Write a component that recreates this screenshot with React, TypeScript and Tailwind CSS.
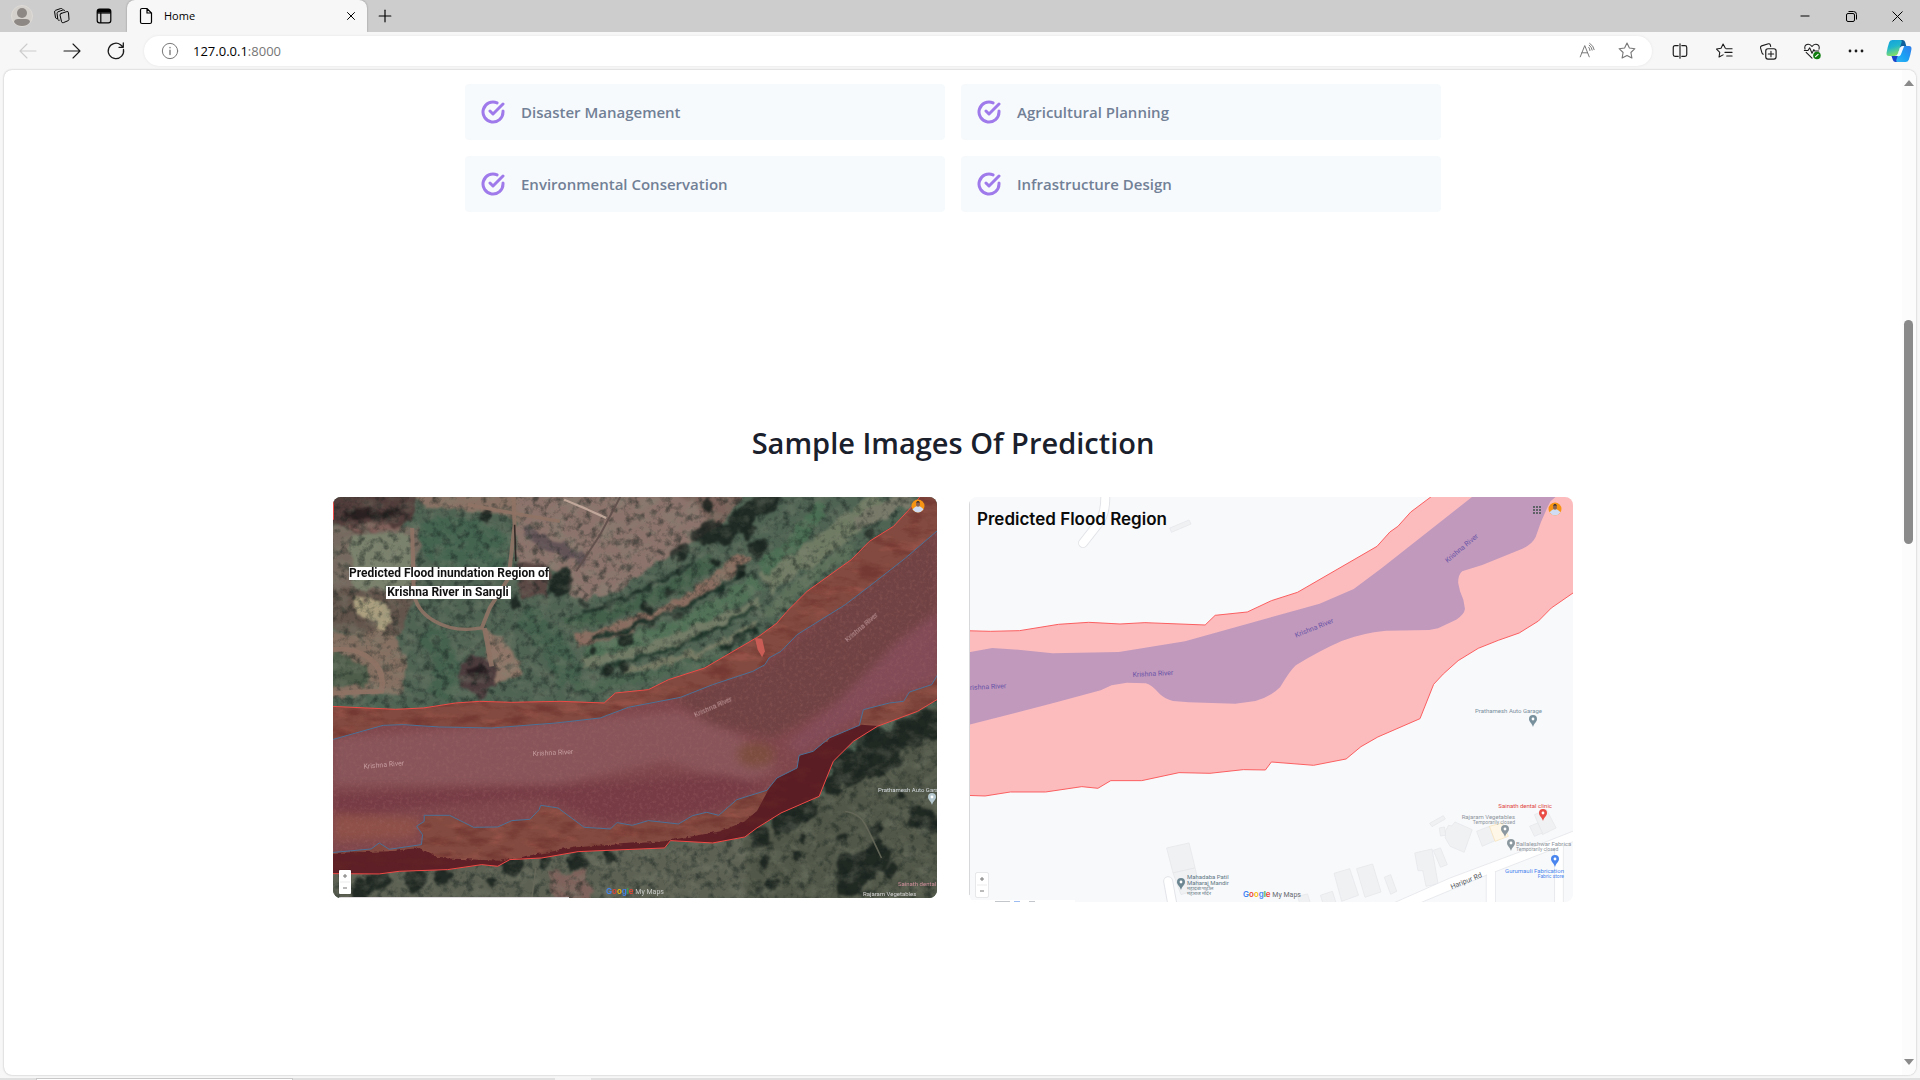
import React from "react";
import { Minus, Plus, X } from "lucide-react";

const ui = "font-['Open_Sans','Noto_Sans',sans-serif]";

const features = [
  "Disaster Management",
  "Agricultural Planning",
  "Environmental Conservation",
  "Infrastructure Design",
];

function Icon({ children, size = 20, className = "" }: { children: React.ReactNode; size?: number; className?: string }) {
  return (
    <svg
      width={size}
      height={size}
      viewBox="0 0 20 20"
      fill="none"
      stroke="currentColor"
      strokeWidth="1.1"
      strokeLinecap="round"
      strokeLinejoin="round"
      className={className}
      aria-hidden="true"
    >
      {children}
    </svg>
  );
}

function TitleBar() {
  const control = "flex h-8 w-[46px] items-center justify-center";
  return (
    <header className="flex h-8 items-stretch bg-[#cdcdcd] text-black">
      <button aria-label="Profile" className="flex w-11 items-center justify-center">
        <svg width="22" height="22" viewBox="0 0 22 22">
          <circle cx="11" cy="11" r="10.5" fill="#d4d0cc" stroke="#dedbd7" />
          <circle cx="11" cy="8" r="5" fill="#8e8884" />
          <path d="M3 17c0-2 2-3 4-3h8c2 0 4 1 4 3-2 3-5 4-8 4s-6-1-8-4z" fill="#8e8884" />
        </svg>
      </button>
      <button aria-label="Workspaces" className="flex w-9 items-center justify-center">
        <Icon size={18}>
          <path d="M9 7.2l6.4-2.1q1.8-.3 1.8 1.2l.6 7.5q0 1-1 1.4l-5.300 2.200q-1.500.5-2-1L7.800 9q-.2-1.300 1.200-1.800z" />
          <path d="M7 14.800q-1.200.2-1.600-.8L4.500 7.200q-.1-1.300 1-1.800L11 3.300q1-.3 1.800.4M4.500 12.800q-1.200.2-1.700-.8L1.800 5.500q-.1-1.300 1-1.800L8.500 1.700q1-.3 1.800.4" />
        </Icon>
      </button>
      <button aria-label="Tab actions" className="flex w-[47px] items-center justify-center">
        <Icon size={16}>
          <rect x="1.500" y="1.500" width="17" height="17" rx="3" strokeWidth="1.500" />
          <path d="M2 6V4q0-2 2-2h12q2 0 2 2v2z" fill="currentColor" />
          <path d="M6 6v12" strokeWidth="1.500" />
        </Icon>
      </button>
      <div className="flex w-60 items-center rounded-t-lg bg-[#f7f7f7] pr-2 pl-3 shadow-[0_0_2px_rgba(0,0,0,0.35)]">
        <svg width="14" height="18" viewBox="0 0 14 18" fill="none" stroke="black" strokeWidth="1.200" aria-hidden="true">
          <path d="M1.500 3q0-1.500 1.500-1.500h5L12.500 6v9q0 1.500-1.500 1.500H3q-1.500 0-1.500-1.500zM8 1.500V6h4.500" />
        </svg>
        <span className={`ml-[11px] flex-1 text-[11px] leading-4 ${ui}`}>Home</span>
        <button aria-label="Close tab" className="flex size-4 items-center justify-center">
          <X size={14} strokeWidth={1.7} />
        </button>
      </div>
      <button aria-label="New tab" className="flex w-9 items-center justify-center">
        <Plus size={20} strokeWidth={1.400} />
      </button>
      <div className="ml-auto flex">
        <button aria-label="Minimize" className={control}>
          <Minus size={14} strokeWidth={1.700} />
        </button>
        <button aria-label="Restore" className={control}>
          <svg width="11" height="11" viewBox="0 0 11 11" fill="none" stroke="black" aria-hidden="true">
            <rect x=".5" y="2.500" width="8" height="8" rx="1.500" />
            <path d="M2.500.500h5q3 0 3 3v5" />
          </svg>
        </button>
        <button aria-label="Close" className={control}>
          <svg width="11" height="11" viewBox="0 0 11 11" stroke="black" aria-hidden="true">
            <path d="M.500.500l10 10M10.500.500l-10 10" />
          </svg>
        </button>
      </div>
    </header>
  );
}

function CopilotLogo() {
  return (
    <svg width="26" height="24" viewBox="0 0 26 24" aria-hidden="true">
      <defs>
        <linearGradient id="cpA" x1="0" y1="0" x2="0.300" y2="1">
          <stop offset="0" stopColor="#14a0dc" />
          <stop offset="0.500" stopColor="#1fb5cf" />
          <stop offset="1" stopColor="#7fdc6a" />
        </linearGradient>
        <linearGradient id="cpB" x1="1" y1="0" x2="0" y2="1">
          <stop offset="0" stopColor="#2f7bea" />
          <stop offset="0.600" stopColor="#1aa3f4" />
          <stop offset="1" stopColor="#36b6f0" />
        </linearGradient>
      </defs>
      <path d="M12 1h4.500q2 0 2.600 2l1.200 4h-3q-2 0-2.800 2z" fill="#0f5f9c" />
      <path d="M14 23H9.500q-2 0-2.600-2L5.500 17h3q2 0 2.800-2z" fill="#1b41c9" />
      <path d="M6.500 1H14q2.300 0 1.600 2.300L12 14.500q-.9 2.500-3.500 2.500H3q-3 0-2.400-3.500Q1.500 8 3.200 3.200 4 1 6.500 1z" fill="url(#cpA)" />
      <path d="M19.500 23H12q-2.300 0-1.600-2.300L14 9.500Q14.900 7 17.500 7H23q3 0 2.400 3.500-.9 5.500-2.600 10.300-.8 2.200-3.300 2.200z" fill="url(#cpB)" />
      <path d="M14.200 8.500q1-1.700 3-1.500h1l-3.300 8.500q-1 2.300-3 1.500H9q2-.3 3-2.500z" fill="#f3f8ff" />
    </svg>
  );
}

const STAR = "M10 2l2.400 5 5.500.7-4 3.800 1 5.500L10 14.400 5.100 17l1-5.500-4-3.800 5.500-.7z";

function Toolbar() {
  const tool = "flex h-8 w-11 items-center justify-center";
  return (
    <nav className="flex h-[38px] items-center bg-[#f7f7f7] pl-1.5 text-[#1b1b1b]">
      <button aria-label="Back" className={`${tool} text-[#cccccc]`} disabled>
        <Icon><path d="M18 10H2M9 3l-7 7 7 7" /></Icon>
      </button>
      <button aria-label="Forward" className={tool}>
        <Icon><path d="M2 10h16M11 3l7 7-7 7" /></Icon>
      </button>
      <button aria-label="Refresh" className={tool}>
        <Icon><path d="M17.500 8.500A7.700 7.700 0 1 1 14.500 3.700L17 6M17.300 2v4.300H13" strokeWidth="1.300" /></Icon>
      </button>
      <div className="ml-1.5 flex h-[30px] flex-1 items-center rounded-full bg-white pr-[5px] pl-[17px] text-[#767676] shadow-[0_0_3px_rgba(0,0,0,0.08)]">
        <Icon size={18}>
          <circle cx="10" cy="10" r="8.500" />
          <path d="M10 9.200v4.800M10 6v.500" strokeWidth="1.500" />
        </Icon>
        <a href="#home" className={`ml-3.5 flex-1 text-[13px] leading-5 ${ui}`}>
          <span className="text-black">127.0.0.1</span>:8000
        </a>
        <button aria-label="Read aloud" className="flex w-10 justify-center">
          <Icon size={18}>
            <path d="M2.500 16.500L7.500 4l5 12.500M4.300 12h6.400M12 6q1.300 1.500 1.300 3.500M12.500 3.500q3 2.500 3.300 5.500M13 1.500q4.500 2.800 5 7" />
          </Icon>
        </button>
        <button aria-label="Add to favorites" className="flex w-10 justify-center">
          <Icon><path d={STAR} /></Icon>
        </button>
      </div>
      <div className="ml-1.5 flex">
        <button aria-label="Split screen" className={tool}>
          <Icon size={18}>
            <path d="M8 4H4.500Q2.500 4 2.500 6v8q0 2 2 2H8M12 4h3.500q2 0 2 2v8q0 2-2 2H12M10 2v16" strokeWidth="1.300" />
          </Icon>
        </button>
        <button aria-label="Favorites" className={tool}>
          <Icon size={18}><path d="M11.500 7L9 2.300 6.700 7l-5 .8 3.600 3.600-.8 5.300 4.500-2.400M12.500 7.500H19M11 11.500h8M13 15.500h6" strokeWidth="1.200" /></Icon>
        </button>
        <button aria-label="Collections" className={tool}>
          <Icon size={18}>
            <rect x="7.500" y="7.500" width="11.500" height="11.500" rx="2.500" strokeWidth="1.300" />
            <path d="M13.300 10.300v6M10.300 13.300h6M4.800 13.500q-1.200-.3-1.500-1.500L1.700 6.500q-.3-1.700 1.200-2.200L10.500 2q1.500-.3 2 1l.500 2" strokeWidth="1.200" />
          </Icon>
        </button>
        <button aria-label="Browser essentials" className={tool}>
          <Icon size={18}>
            <path d="M2.200 8Q1 3 5.500 2.500 8.300 2.300 10 5q1.700-2.700 4.500-2.500Q19 3 17.800 8M3.500 11.500L10 18M1.500 9.500h4l2-3 2.500 6 2-4 1 1.500h4.500" strokeWidth="1.200" />
            <circle cx="15.500" cy="15" r="4.200" fill="#107c10" stroke="none" />
            <path d="M14 16.300l2.800-2.600" stroke="white" strokeWidth="1.300" />
          </Icon>
        </button>
        <button aria-label="Settings and more" className={tool}>
          <Icon>
            <path d="M4 10h.01M10 10h.01M16 10h.01" strokeWidth="2.800" />
          </Icon>
        </button>
        <button aria-label="Copilot" className="flex h-8 w-[42px] items-center justify-center">
          <CopilotLogo />
        </button>
      </div>
    </nav>
  );
}

function Feature({ label }: { label: string }) {
  return (
    <li className="flex h-14 items-center rounded bg-[#f7fafc] px-4">
      <svg
        width="24"
        height="24"
        viewBox="0 0 24 24"
        fill="none"
        stroke="#9f7aea"
        strokeWidth="3"
        strokeLinecap="round"
        strokeLinejoin="round"
        aria-hidden="true"
      >
        <path d="M22 11.080V12a10 10 0 1 1-5.930-9.140" />
        <path d="M22 4L12 14.010l-3-3" />
      </svg>
      <span className={`ml-4 text-[15px] leading-6 font-semibold text-[#718096] ${ui}`}>{label}</span>
    </li>
  );
}

function Pin({ x, y, color }: { x: number; y: number; color: string }) {
  return (
    <g transform={`translate(${x} ${y})`}>
      <path d="M0 8C-1 4-4 3-4 0a4 4 0 1 1 8 0C4 3 1 4 0 8z" fill={color} />
      <circle r="1.400" fill="white" />
    </g>
  );
}

type LabelProps = {
  x: number;
  y: number;
  children: React.ReactNode;
  size?: number;
  color?: string;
  anchor?: "start" | "middle" | "end";
  turn?: number;
  weight?: number;
};

function Label({ x, y, children, size = 6, color = "#78909c", anchor = "start", turn = 0, weight = 400 }: LabelProps) {
  return (
    <text
      transform={`translate(${x} ${y}) rotate(${turn})`}
      fontFamily="Roboto, sans-serif"
      fontSize={size}
      fontWeight={weight}
      fill={color}
      textAnchor={anchor}
    >
      {children}
    </text>
  );
}

function GoogleMaps({ x, y, tone }: { x: number; y: number; tone: string }) {
  return (
    <text x={x} y={y} fontFamily="Inter, sans-serif" fontSize="8" fontWeight="600">
      <tspan fill="#4285f4">G</tspan>
      <tspan fill="#ea4335">o</tspan>
      <tspan fill="#fbbc05">o</tspan>
      <tspan fill="#4285f4">g</tspan>
      <tspan fill="#34a853">l</tspan>
      <tspan fill="#ea4335">e</tspan>
      <tspan fill={tone} fontFamily="Roboto, sans-serif" fontWeight="400" fontSize="7"> My Maps</tspan>
    </text>
  );
}

function ZoomControl({ x, y }: { x: number; y: number }) {
  return (
    <g transform={`translate(${x} ${y})`}>
      <rect x="-.5" y="-.5" width="13" height="25" rx="1" fill="#00000022" />
      <rect width="12" height="24" rx="1" fill="white" />
      <path d="M1 12h10" stroke="#e3e3e3" strokeWidth=".7" />
      <path d="M4 6h4M6 4v4M4 18h4" stroke="#777" />
    </g>
  );
}

function Avatar({ x, y }: { x: number; y: number }) {
  return (
    <g transform={`translate(${x} ${y})`}>
      <circle r="6.500" fill="#f79414" />
      <path d="M-5.500 3.500Q-3 0 0 0t5.500 3.500Q3 6.500 0 6.500t-5.500-3z" fill="#cfdcf2" />
      <ellipse cy="-2" rx="2" ry="2.800" fill="#8b6350" />
      <path d="M-2-3.500q2-3 4 0z" fill="#2d2522" />
    </g>
  );
}

const FLOOD_TOP =
  "M30 665L190 674L260 670L340 655L400 650L480 653L600 650L710 655L738 625L820 615L870 585L960 550L1095 455L1140 415L1165 380L1215 320L1290 255L1325 225L1370 170L1430 125L1480 60L1500 30";
const FLOOD_BOTTOM =
  "L1545 640L1490 680L1390 725L1330 770L1280 830L1245 935L1150 985L1090 1030L1060 1057L980 1075L875 1068L860 1090L645 1101L555 1120L475 1125L445 1145L405 1140L320 1155L200 1160L150 1168L30 1167";
const WATER_TOP =
  "M30 766L160 722L210 720L300 727L430 730L590 715L700 700L770 668L900 638L980 600L1080 560L1110 540L1120 520L1150 500L1190 450L1310 360L1370 305L1460 220L1545 132";
const WATER_BOTTOM_POINTS =
  "1545 560L1525 600L1470 622L1455 650L1420 655L1355 675L1345 722L1270 760L1230 800L1195 812L1190 850L1140 880L1115 917L1040 945L995 992L965 983L930 993L895 1018L820 1008L780 1022L742 1014L725 1033L660 1028L595 970L552 962L548 975L525 1004L480 1008L445 1027L385 1028L325 992L262 992L262 1010L243 1025L258 1050L255 1080L175 1094L150 1075L130 1093L30 1104";

const trees: [number, number, number][] = [
  [945, 150, 22], [975, 135, 30], [1010, 150, 26], [1050, 110, 30], [1075, 75, 28], [1100, 55, 26], [1090, 190, 24],
  [1060, 140, 24], [900, 205, 18], [965, 60, 14], [600, 290, 30], [610, 310, 20], [660, 355, 14], [765, 465, 18],
  [685, 500, 12], [490, 355, 14], [990, 232, 14], [1050, 262, 14], [1120, 50, 26], [415, 90, 16],
  [1370, 150, 10], [870, 325, 12], [820, 370, 14], [890, 395, 10], [720, 560, 12], [760, 550, 12],
  [1320, 850, 44], [1390, 800, 60], [1470, 740, 46], [1520, 720, 40], [1500, 1000, 32], [1525, 1025, 26], [1340, 1150, 46],
  [1390, 1110, 36], [1320, 1190, 36], [1280, 900, 26], [1210, 975, 30], [1160, 1010, 36], [1100, 1060, 26], [1110, 1130, 14],
  [1190, 1120, 12], [1130, 1200, 14], [1300, 1060, 12], [1385, 1040, 14], [1395, 1070, 12],
  [1450, 930, 12], [1425, 1160, 16], [1100, 1220, 14], [150, 1190, 28], [240, 1185, 26], [310, 1175, 20], [480, 1145, 26],
  [560, 1130, 18], [640, 1130, 24], [720, 1115, 14], [430, 1195, 14], [110, 1215, 26], [1200, 1060, 10],
];

const rows: [string, string, number][] = [
  ["M640 470Q900 400 1060 210", "#8a6d60", 12],
  ["M620 420Q850 360 990 220", "#43604b", 13],
  ["M650 390Q800 330 940 230", "#26392f", 4],
  ["M680 460Q880 410 1060 262", "#20342b", 5],
  ["M660 510Q950 430 1090 290", "#527258", 15],
  ["M650 540Q900 480 1100 350", "#717b65", 10],
  ["M700 555Q900 500 1090 370", "#263d30", 4],
  ["M760 560Q950 520 1090 425", "#757a64", 7],
  ["M760 600Q960 530 1095 430", "#20342a", 5],
  ["M640 610Q900 570 1000 500", "#4d6753", 10],
  ["M1110 300Q1260 180 1400 45", "#707b64", 22],
  ["M1100 250Q1200 180 1250 60", "#4a6e53", 14],
  ["M1110 400Q1230 260 1330 190", "#5c705a", 12],
  ["M1330 120Q1400 80 1480 37", "#797969", 14],
];

function SatelliteMap() {
  return (
    <svg viewBox="0 0 604 401" className="block w-full rounded-lg" role="img" aria-label="Satellite view of the predicted flood region">
      <defs>
        <filter id="rough" x="-5%" y="-5%" width="110%" height="110%" colorInterpolationFilters="sRGB">
          <feTurbulence type="fractalNoise" baseFrequency="0.070" numOctaves="4" seed="4" />
          <feDisplacementMap in="SourceGraphic" scale="14" xChannelSelector="R" yChannelSelector="G" />
          <feGaussianBlur stdDeviation="0.800" />
        </filter>
        <filter id="shade" x="0" y="0" width="100%" height="100%" colorInterpolationFilters="sRGB">
          <feTurbulence type="fractalNoise" baseFrequency="0.120" numOctaves="5" seed="9" />
          <feColorMatrix values="0 0 0 0 0.080  0 0 0 0 0.120  0 0 0 0 0.110  3 0 0 0 -1.400" />
        </filter>
        <filter id="glow" x="0" y="0" width="100%" height="100%" colorInterpolationFilters="sRGB">
          <feTurbulence type="fractalNoise" baseFrequency="0.060 0.080" numOctaves="5" seed="21" />
          <feColorMatrix values="0 0 0 0 0.510  0 0 0 0 0.530  0 0 0 0 0.460  0 2.600 0 0 -1.150" />
        </filter>
        <filter id="rust" x="0" y="0" width="100%" height="100%" colorInterpolationFilters="sRGB">
          <feTurbulence type="fractalNoise" baseFrequency="0.040 0.100" numOctaves="5" seed="3" />
          <feColorMatrix values="0 0 0 0 0.400  0 0 0 0 0.160  0 0 0 0 0.150  3 0 0 0 -1.400" />
        </filter>
        <filter id="clay" x="0" y="0" width="100%" height="100%" colorInterpolationFilters="sRGB">
          <feTurbulence type="fractalNoise" baseFrequency="0.040 0.090" numOctaves="5" seed="14" />
          <feColorMatrix values="0 0 0 0 0.650  0 0 0 0 0.350  0 0 0 0 0.310  0 3.400 0 0 -1.700" />
        </filter>
        <filter id="foam" x="0" y="0" width="100%" height="100%" colorInterpolationFilters="sRGB">
          <feTurbulence type="fractalNoise" baseFrequency="0.300" numOctaves="4" seed="7" />
          <feColorMatrix values="0 0 0 0 0.660  0 0 0 0 0.430  0 0 0 0 0.430  0 1.600 0 0 -0.700" />
        </filter>
        <filter id="soft" x="-20%" y="-20%" width="140%" height="140%" colorInterpolationFilters="sRGB">
          <feGaussianBlur stdDeviation="12" />
        </filter>
        <clipPath id="floodClip"><path d={FLOOD_TOP + "L1545 30" + FLOOD_BOTTOM + "Z"} transform="scale(.4018 .3333) translate(-35 -37)" /></clipPath>
        <clipPath id="waterClip"><path d={WATER_TOP + "L" + WATER_BOTTOM_POINTS + "Z"} transform="scale(.4018 .3333) translate(-35 -37)" /></clipPath>
      </defs>
      <rect width="604" height="401" fill="#506454" />
      <g filter="url(#rough)">
        <g transform="scale(.4018 .3333) translate(-35 -37)">
          <path d="M1040 1060L1250 930L1300 820L1560 640V1260H1040z" fill="#525849" />
          <path d="M20 1165L1060 1060V1260H20z" fill="#5c6153" />
          <path d="M20 130H250L240 340H20z" fill="#76695f" />
          <path d="M80 140L220 145L235 310L85 320z" fill="#7a816c" />
          <path d="M225 20H500V110L440 90L250 60z" fill="#8a7366" />
          <path d="M0 0H240L235 110L130 140L50 125L0 130z" fill="#503c3a" />
          <path d="M60 80Q150 60 225 90Q160 115 60 95z" fill="#2b2021" />
          <path d="M60 120Q150 115 210 125L140 140z" fill="#80605a" />
          <path d="M20 310L240 335L205 450L20 430z" fill="#64554c" />
          <path d="M90 335L130 340L180 375L165 450L145 450L140 410L85 400z" fill="#ab9f7f" />
          <path d="M20 440L190 440L220 540L200 620L20 640z" fill="#857062" />
          <path d="M20 510Q120 500 130 600L20 610z" fill="#4d5d4a" />
          <path d="M250 120Q340 80 400 110L470 150L460 260L300 250Q240 200 250 120z" fill="#446450" />
          <path d="M498 20H900L1000 120L930 180L880 210L700 340L620 340L620 260L490 230z" fill="#8c746c" />
          <path d="M880 20H1060L1000 120z" fill="#7c635b" />
          <path d="M510 125L665 205L650 240L515 165z" fill="#625357" />
          <path d="M490 225L570 240L570 340L500 330z" fill="#5a4744" />
          <path d="M410 430L480 480L505 560L440 600L420 540z" fill="#8f7668" />
          <path d="M350 540L375 515L440 530L445 600L400 635L345 610z" fill="#4d3c3e" />
          <path d="M370 550L410 540L425 580L385 595z" fill="#281d21" />
          <path d="M570 1160H660L680 1260H590z" fill="#7e625b" />
        </g>
      </g>
      <g filter="url(#rough)" fill="none">
        <g transform="scale(.4018 .3333) translate(-35 -37)">
          {rows.map(([d, c, w]) => (
            <path key={d} d={d} stroke={c} strokeWidth={w} vectorEffect="non-scaling-stroke" />
          ))}
          <path d="M265 440Q350 520 300 640M500 400Q600 450 620 600" stroke="#3e624c" strokeWidth="26" vectorEffect="non-scaling-stroke" opacity=".6" />
        </g>
      </g>
      <g filter="url(#rough)">
        <g transform="scale(.4018 .3333) translate(-35 -37)" fill="#161f1c" opacity=".82">
          {trees.map(([x, y, r]) => (
            <ellipse key={`${x}-${y}`} cx={x} cy={y} rx={r} ry={r * 1.200} />
          ))}
        </g>
      </g>
      <rect width="604" height="401" filter="url(#shade)" opacity=".5" />
      <rect width="604" height="401" filter="url(#glow)" opacity=".35" />
      <g transform="scale(.4018 .3333) translate(-35 -37)" fill="none" stroke="#8f7365" strokeOpacity=".9">
        <path d="M484 37L487 120L472 280L425 370L405 430C310 450 240 390 236 320L232 130" strokeWidth="10" />
        <path d="M412 430L430 545" strokeWidth="12" />
        <path d="M35 495C110 485 170 540 155 620L35 625" strokeWidth="14" />
        <path d="M370 60L480 85L600 110" strokeWidth="10" />
        <path d="M750 37L700 150L640 260" stroke="#5f4f4b" strokeWidth="5" />
        <path d="M487 120L490 230" stroke="#2c2422" strokeWidth="4" />
        <path d="M610 45L660 70L715 100" stroke="#c6ada0" strokeWidth="6" />
        <path d="M1310 980Q1345 985 1360 1020T1400 1120M540 1150L530 1239" stroke="#67695a" strokeWidth="4" />
      </g>
      <g clipPath="url(#floodClip)">
        <rect width="604" height="401" fill="#824a40" />
        <rect width="604" height="401" filter="url(#clay)" opacity=".5" />
        <g transform="scale(.4018 .3333) translate(-35 -37)">
          <path d="M30 1105L180 1100L250 1090L300 1120L450 1128L640 1088L860 1070L1000 1040L1060 1010L1110 960L1140 880L1265 770L1300 700L1345 725L1290 800L1245 940L1060 1070L860 1100L640 1115L440 1160L30 1190z" fill="#5e1f26" filter="url(#rough)" />
          <path d="M1200 810L1280 765L1350 720L1400 725L1290 840L1250 950L1140 1000L1060 1060L1000 1070L1090 980L1130 890z" fill="#5b1d24" />
        </g>
        <rect width="604" height="401" filter="url(#rust)" opacity=".5" />
      </g>
      <g clipPath="url(#waterClip)">
        <rect width="604" height="401" fill="#7f474c" />
        <g transform="scale(.4018 .3333) translate(-35 -37)" filter="url(#soft)">
          <path d="M880 640L1110 540L1540 130V420L1400 560L1250 680L1130 760L980 720z" fill="#704243" />
          <path d="M35 760L700 700L900 680L1060 760L1140 850L1060 900L860 830L600 900L35 900z" fill="#89555a" />
          <path d="M1540 380L1440 470L1280 660L1160 780L1200 810L1400 650L1540 580z" fill="#824b57" />
          <path d="M640 900L1000 870L1120 900L980 980L720 1020L560 940L300 960L35 1000V930z" fill="#763b45" />
          <path d="M35 985L250 1000L240 1060L35 1070z" fill="#8e5048" />
          <ellipse cx="1087" cy="810" rx="46" ry="36" fill="#7c4d3f" />
        </g>
        <rect width="604" height="401" filter="url(#foam)" opacity=".4" />
      </g>
      <g transform="scale(.4018 .3333) translate(-35 -37)" fill="none">
        <path d="M1085 460L1103 462L1110 500L1103 518L1092 495z" fill="#c95d55" />
        <path d={WATER_TOP} stroke="#4c7196" strokeWidth="1" vectorEffect="non-scaling-stroke" />
        <path d={"M" + WATER_BOTTOM_POINTS} stroke="#4c7196" strokeWidth="1" vectorEffect="non-scaling-stroke" />
        <path d={FLOOD_TOP + "M1545 640" + FLOOD_BOTTOM} stroke="#ee4a46" strokeWidth="1" vectorEffect="non-scaling-stroke" />
        <path d="M35 50V105" stroke="#ee4a46" strokeWidth="2" vectorEffect="non-scaling-stroke" />
      </g>
      <g opacity=".75">
        <Label x={51} y={270} size={7} color="#d8b3b6" anchor="middle" turn={-5}>Krishna River</Label>
        <Label x={220} y={258} size={7} color="#d8b3b6" anchor="middle" turn={-3}>Krishna River</Label>
        <Label x={381} y={212} size={7} color="#d8b3b6" anchor="middle" turn={-24}>Krishna River</Label>
        <Label x={530} y={132} size={7} color="#d8b3b6" anchor="middle" turn={-41}>Krishna River</Label>
      </g>
      <rect x="16" y="70" width="200" height="13" fill="white" />
      <rect x="53" y="89" width="125" height="13" fill="white" />
      <Label x={116} y={80} size={12} color="#111" weight={700} anchor="middle">Predicted Flood inundation Region of</Label>
      <Label x={115} y={99} size={12} color="#111" weight={700} anchor="middle">Krishna River in Sangli</Label>
      <Label x={545} y={295} color="#d5dbdf">Prathamesh Auto Gara</Label>
      <Pin x={599} y={300} color="#b4c6cd" />
      <Label x={565} y={389} color="#cf8f9c">Sainath dental</Label>
      <Label x={530} y={399} color="#d5d5d5">Rajaram Vegetables</Label>
      <GoogleMaps x={273} y={397} tone="#c9cbc8" />
      <ZoomControl x={6} y={373} />
      <path d="M6 400.500H236" stroke="#ddd8dc" />
      <Avatar x={585} y={9} />
    </svg>
  );
}

const buildings = [
  "522,130 570,106 575,118 526,143",
  "514,1090 570,1075 585,1150 530,1165",
  "530,1165 585,1150 597,1212 550,1230",
  "931,1166 970,1152 992,1232 950,1250",
  "987,1152 1027,1138 1048,1222 1008,1238",
  "1056,1178 1072,1170 1087,1220 1072,1229",
  "897,1232 927,1220 936,1255 903,1255",
  "840,1235 865,1228 872,1255 845,1255",
  "1132,1105 1175,1093 1190,1198 1160,1205 1152,1158 1140,1158",
  "1178,1097 1196,1090 1213,1140 1196,1148",
  "1208,1040 1216,1022 1224,1024 1232,1012 1275,1035 1255,1103 1220,1085 1208,1060",
  "1193,1030 1206,1027 1209,1052 1196,1054",
  "1169,1016 1203,993 1208,1003 1175,1026",
  "1286,1040 1318,1025 1332,1068 1300,1085",
  "1430,990 1460,975 1484,1030 1450,1050",
  "1418,1025 1438,1015 1450,1045 1430,1055",
];

function StreetMap() {
  return (
    <svg viewBox="0 0 604 405" className="block w-full rounded-lg" role="img" aria-label="Map view of the predicted flood region">
      <rect width="604" height="405" fill="#f8f9fb" />
      <g transform="scale(.4016 .3333) translate(-22 -37)">
        <g fill="none" strokeLinecap="round">
          {["#e2e4e8", "#ffffff"].map((c, i) => (
            <g key={c} stroke={c} strokeWidth={i ? 8 : 10}>
              <path d="M361 20Q364 85 345 115L306 175" vectorEffect="non-scaling-stroke" />
              <path d="M518 1190L530 1270" vectorEffect="non-scaling-stroke" />
            </g>
          ))}
        </g>
        <g fill="#f0f1f3" stroke="#e4e6e9" strokeWidth="2">
          {buildings.map((p) => <polygon key={p} points={p} />)}
        </g>
        <polygon points="1318,1025 1350,1015 1365,1055 1332,1070" fill="#fef7e8" stroke="#f7e3b8" strokeWidth="2" />
        <path d="M1310 1160V1260H1333V1150M1480 1080V1260H1502V1070" fill="white" stroke="#e2e4e8" strokeWidth="2" />
        <path d="M1070 1260L1220 1180L1420 1090L1540 1033V1065L1480 1092L1310 1172L1135 1260z" fill="white" stroke="#e2e4e8" strokeWidth="2" />
        <path d="M1312 1160H1332V1180L1312 1185zM1482 1080H1500V1100H1482z" fill="white" />
        <path
          d="M10 438L75 440L148 438L245 419L320 413L398 418L460 414L610 421L635 392L715 382L775 348L840 323L1038 185L1070 142L1090 125L1122 82L1185 25H1545V310L1526 325L1472 370L1440 409L1392 445L1340 467L1290 491L1240 528L1203 568L1179 599L1145 702L1040 757L998 786L961 823L880 842L775 832L760 856L705 855L622 866L545 864L452 888L375 888L343 911L303 906L213 922L125 922L62 934L10 932z"
          fill="#fcbcbe"
          stroke="#fb5f60"
          strokeWidth="1"
          vectorEffect="non-scaling-stroke"
        />
        <path
          d="M10 505L80 490L145 495L230 506L395 502L560 470L895 357L980 313L1050 250L1285 27H1492L1470 50Q1448 100 1433 157Q1425 178 1400 192L1300 241L1250 260Q1240 270 1240 294Q1243 320 1253 345L1257 373Q1255 390 1235 405L1190 431L1168 436L1060 438Q1000 445 950 469Q900 495 838 540Q825 550 797 607Q775 635 735 649L685 657L570 653L530 649Q510 643 497 628Q475 598 462 596L415 594L377 602L350 617L230 656L10 724z"
          fill="#c199bc"
        />
      </g>
      <Label x={1} y={193} size={7} color="#6a55a8" turn={-3}>rishna River</Label>
      <Label x={184} y={179} size={7} color="#6a55a8" anchor="middle" turn={-3}>Krishna River</Label>
      <Label x={346} y={133} size={7} color="#6a55a8" anchor="middle" turn={-22}>Krishna River</Label>
      <Label x={494} y={53} size={7} color="#6a55a8" anchor="middle" turn={-40}>Krishna River</Label>
      <text x="8" y="28" fontFamily="Inter, sans-serif" fontSize="17" fontWeight="600" fill="#0a0a0a">Predicted Flood Region</text>
      <Label x={573} y={216} anchor="end">Prathamesh Auto Garage</Label>
      <Pin x={564} y={222} color="#78909c" />
      <Label x={583} y={311} color="#e0453f" anchor="end">Sainath dental clinic</Label>
      <Pin x={574} y={316} color="#ea4d45" />
      <Label x={546} y={322} color="#8d959b" anchor="end">Rajaram Vegetables</Label>
      <Label x={546} y={327} size={5} color="#8d959b" anchor="end">Temporarily closed</Label>
      <Pin x={536} y={332} color="#8c989f" />
      <Pin x={542} y={346} color="#8c989f" />
      <Label x={547} y={349} color="#8d959b">Ballaleshwar Fabrica</Label>
      <Label x={547} y={354} size={5} color="#8d959b">Temporarily closed</Label>
      <Pin x={586} y={362} color="#4a86ee" />
      <Label x={595} y={376} color="#4a86ee" anchor="end">Gurumauli Fabrication</Label>
      <Label x={595} y={381} size={5} color="#4a86ee" anchor="end">Fabric store</Label>
      <Pin x={212} y={385} color="#6b8591" />
      <Label x={218} y={382} color="#5f7884">Mahadaba Patil</Label>
      <Label x={218} y={388} color="#5f7884">Maharaj Mandir</Label>
      <Label x={218} y={393} size={5} color="#5f7884">महादबा पाटील</Label>
      <Label x={218} y={398} size={5} color="#5f7884">महाराज मंदिर</Label>
      <Label x={498} y={386} color="#50555a" size={7} anchor="middle" turn={-22}>Haripur Rd</Label>
      <GoogleMaps x={274} y={400} tone="#666b70" />
      <ZoomControl x={7} y={376} />
      <rect y="403" width="106" height="2" fill="white" />
      <path d="M.500 4V398" stroke="#d6d8da" />
      <path d="M26 404.500h15M60 404.500h6" stroke="#c3c6ca" />
      <path d="M45 404.500h6" stroke="#9dbcf2" />
      <g fill="#5f6368">
        {[0, 1, 2].map((r) => [0, 1, 2].map((c) => (
          <rect key={`${r}-${c}`} x={564 + c * 3} y={9 + r * 3} width="2" height="2" />
        )))}
      </g>
      <Avatar x={586} y={12} />
    </svg>
  );
}

function Scrollbar() {
  return (
    <div className="flex w-3.5 flex-col items-center bg-[#fcfcfc] pr-px" aria-hidden="true">
      <svg width="10" height="6" viewBox="0 0 10 6" className="mt-2.5"><path d="M0 6L5 0l5 6z" fill="#8a8a8a" /></svg>
      <div className="flex w-full flex-1 flex-col items-center">
        <div className="grow-[234]" />
        <div className="w-[9px] grow-[224] rounded-full bg-[#8a8a8a]" />
        <div className="grow-[514]" />
      </div>
      <svg width="10" height="6" viewBox="0 0 10 6" className="mb-2.5"><path d="M0 0h10L5 6z" fill="#8a8a8a" /></svg>
    </div>
  );
}

export default function App() {
  return (
    <div className="flex min-h-screen flex-col bg-[#f7f7f7]">
      <TitleBar />
      <Toolbar />
      <div className="mx-1 mb-[3px] flex flex-1 overflow-hidden rounded-lg bg-white shadow-[0_0_2px_rgba(0,0,0,0.3)]">
        <main className="flex-1 pt-3.5">
          <ul className="mx-auto grid max-w-[976px] grid-cols-2 gap-4">
            {features.map((f) => <Feature key={f} label={f} />)}
          </ul>
          <section className="mx-auto mt-[213px] max-w-[1240px]">
            <h2 className={`text-center text-[29px] leading-9 font-semibold text-[#1a202c] ${ui}`}>
              Sample Images Of Prediction
            </h2>
            <div className="mt-9 grid grid-cols-2 items-start gap-8">
              <SatelliteMap />
              <StreetMap />
            </div>
          </section>
        </main>
        <Scrollbar />
      </div>
      <div className="flex h-0.5 bg-[#e0e0e0]" aria-hidden="true">
        <div className="ml-9 w-[257px] border border-b-0 border-[#c8c8c8] bg-white" />
        <div className="ml-[262px] w-9 bg-[#f4f4f4]" />
      </div>
    </div>
  );
}
